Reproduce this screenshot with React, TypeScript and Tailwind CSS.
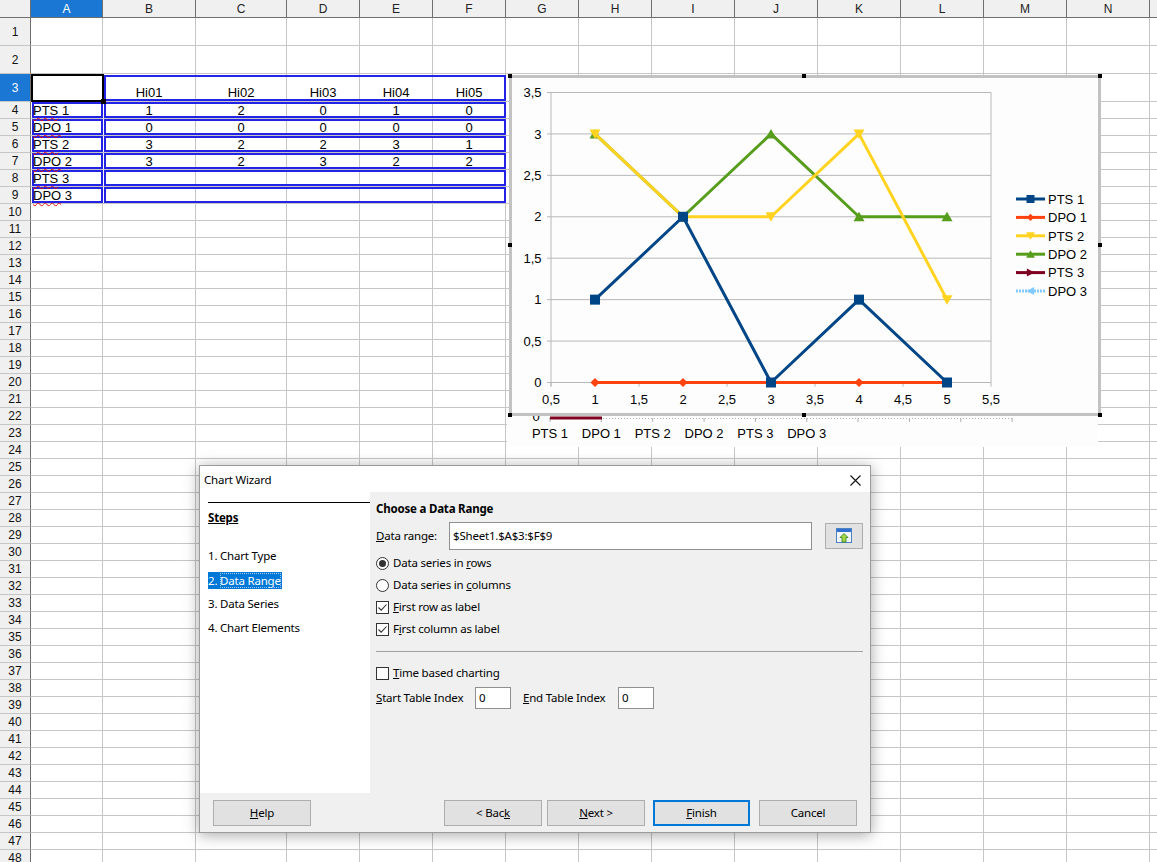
import React from "react";

const COLW = [
  "w-[72px]", "w-[93px]", "w-[91px]", "w-[73px]", "w-[73px]", "w-[73px]", "w-[73px]", "w-[73px]",
  "w-[83px]", "w-[83px]", "w-[83px]", "w-[83px]", "w-[83px]", "w-[83px]", "w-[83px]",
];
const LETTERS = ["A", "B", "C", "D", "E", "F", "G", "H", "I", "J", "K", "L", "M", "N", ""];
const ROWS = Array.from({ length: 48 }, (_, i) => i + 1);

const DATA: Record<number, string[]> = {
  3: ["", "Hi01", "Hi02", "Hi03", "Hi04", "Hi05"],
  4: ["PTS 1", "1", "2", "0", "1", "0"],
  5: ["DPO 1", "0", "0", "0", "0", "0"],
  6: ["PTS 2", "3", "2", "2", "3", "1"],
  7: ["DPO 2", "3", "2", "3", "2", "2"],
  8: ["PTS 3"],
  9: ["DPO 3"],
};

function HeaderRow() {
  return (
    <div className="flex h-[18px]">
      <div className="w-[31px] shrink-0 bg-[#f0f0f0] border-r border-b border-[#6f6f6f]" />
      {LETTERS.map((L, i) => (
        <div
          key={i}
          className={`${COLW[i]} shrink-0 flex items-center justify-center border-r border-b border-[#6f6f6f] text-[12px] ${
            i === 0 ? "bg-[#1a78d4] text-white" : "bg-[#f0f0f0] text-[#222]"
          }`}
        >
          {L}
        </div>
      ))}
    </div>
  );
}

function Label({ text }: { text: string }) {
  const [w, n] = text.split(" ");
  return (
    <span className="relative z-10">
      <span className="underline decoration-wavy decoration-[#e01010] decoration-1 underline-offset-[2px]">{w}</span> {n}
    </span>
  );
}

function Row({ r }: { r: number }) {
  const d = DATA[r];
  const tall = r <= 3;
  return (
    <div className={`flex ${tall ? "h-[28px]" : "h-[17px]"}`}>
      <div
        className={`w-[31px] shrink-0 flex items-center justify-center border-r border-r-[#6f6f6f] border-b border-b-[#c6c6c6] text-[12px] ${
          r === 3 ? "bg-[#1a78d4] text-white" : "bg-[#f0f0f0] text-[#111]"
        }`}
      >
        {r}
      </div>
      {LETTERS.map((L, ci) => {
        const v = d && d[ci] ? d[ci] : "";
        return (
          <div
            key={ci}
            className={`${COLW[ci]} shrink-0 flex border-r border-b border-[#c6c6c6] leading-[15px] ${
              tall ? "items-end pb-[1px]" : "items-center"
            } ${ci === 0 ? "justify-start pl-[2px]" : "justify-center"}`}
          >
            {v ? ci === 0 ? <Label text={v} /> : <span>{v}</span> : null}
          </div>
        );
      })}
    </div>
  );
}

function Overlays() {
  const tops = ["top-[102px]", "top-[119px]", "top-[136px]", "top-[153px]", "top-[170px]", "top-[187px]"];
  return (
    <>
      {tops.map((t) => (
        <React.Fragment key={t}>
          <div className={`absolute ${t} left-[32px] w-[71px] h-[16px] border-2 border-[#2323e6]`} />
          <div className={`absolute ${t} left-[104px] w-[402px] h-[16px] border-2 border-[#2323e6]`} />
        </React.Fragment>
      ))}
      <div className="absolute top-[75px] left-[104px] w-[402px] h-[26px] border-2 border-[#2323e6]" />
      <div className="absolute top-[74px] left-[31px] w-[73px] h-[28px] border-2 border-black" />
      <div className="absolute top-[99px] left-[101px] w-[5px] h-[5px] bg-black" />
    </>
  );
}

const X = (i: number) => 551 + (i - 0.5) * 88;
const Y = (v: number) => 382.5 - v * 82.86;

type Marker = "square" | "diamond" | "down" | "up" | "right" | "left";

function MarkerShape({ m, x, y, c, s = 1 }: { m: Marker; x: number; y: number; c: string; s?: number }) {
  if (m === "square") return <rect x={x - 5 * s} y={y - 5 * s} width={10 * s} height={10 * s} fill={c} />;
  if (m === "diamond")
    return <polygon points={`${x},${y - 4.5 * s} ${x + 4.5 * s},${y} ${x},${y + 4.5 * s} ${x - 4.5 * s},${y}`} fill={c} />;
  if (m === "down")
    return <polygon points={`${x - 5.5 * s},${y - 4.5 * s} ${x + 5.5 * s},${y - 4.5 * s} ${x},${y + 5 * s}`} fill={c} />;
  if (m === "up")
    return <polygon points={`${x - 5.5 * s},${y + 4.5 * s} ${x + 5.5 * s},${y + 4.5 * s} ${x},${y - 5 * s}`} fill={c} />;
  if (m === "right")
    return <polygon points={`${x - 4.5 * s},${y - 5 * s} ${x - 4.5 * s},${y + 5 * s} ${x + 5 * s},${y}`} fill={c} />;
  return <polygon points={`${x + 4.5 * s},${y - 5 * s} ${x + 4.5 * s},${y + 5 * s} ${x - 5 * s},${y}`} fill={c} />;
}

const SERIES: { name: string; color: string; m: Marker; vals: number[] }[] = [
  { name: "PTS 1", color: "#004586", m: "square", vals: [1, 2, 0, 1, 0] },
  { name: "DPO 1", color: "#ff420e", m: "diamond", vals: [0, 0, 0, 0, 0] },
  { name: "PTS 2", color: "#ffd320", m: "down", vals: [3, 2, 2, 3, 1] },
  { name: "DPO 2", color: "#579d1c", m: "up", vals: [3, 2, 3, 2, 2] },
  { name: "PTS 3", color: "#7e0021", m: "right", vals: [] },
  { name: "DPO 3", color: "#83caff", m: "left", vals: [] },
];

function Chart() {
  const yLabels = ["0", "0,5", "1", "1,5", "2", "2,5", "3", "3,5"];
  const xLabels = ["0,5", "1", "1,5", "2", "2,5", "3", "3,5", "4", "4,5", "5", "5,5"];
  const hiddenTicks = Array.from({ length: 10 }, (_, k) => 550 + k * 51.35);
  const hiddenLabels = ["PTS 1", "DPO 1", "PTS 2", "DPO 2", "PTS 3", "DPO 3"];
  const handles: [number, number][] = [
    [508, 74], [802, 74], [1098, 74], [508, 243], [1098, 243], [508, 413], [802, 413], [1098, 413],
  ];
  const drawn = [...SERIES].slice(0, 4).reverse();
  return (
    <svg
      className="absolute left-[507px] top-[73px]"
      width="596"
      height="376"
      viewBox="507 73 596 376"
      fontFamily="'Liberation Sans', Arial, sans-serif"
      fontSize="13"
    >
      {/* remains of the hidden chart below */}
      <rect x="507" y="415" width="591" height="32" fill="#fdfdfd" />
      <line x1="549" y1="418.5" x2="1012" y2="418.5" stroke="#b0b0b0" strokeDasharray="1 2" />
      {hiddenTicks.map((t) => (
        <line key={t} x1={t} y1="418" x2={t} y2="422" stroke="#b0b0b0" />
      ))}
      <rect x="550" y="416.5" width="52" height="3" fill="#7e0021" />
      <text x="536" y="421" textAnchor="middle" fill="#000">0</text>
      {hiddenLabels.map((l, k) => (
        <text key={l} x={550 + k * 51.35} y="438" textAnchor="middle" fill="#000">
          {l}
        </text>
      ))}

      {/* chart frame */}
      <rect x="510.5" y="76.5" width="589" height="338" fill="#fdfdfd" stroke="#c2c2c2" strokeWidth="3" />
      {handles.map(([hx, hy]) => (
        <rect key={`${hx}-${hy}`} x={hx} y={hy} width="4" height="4" fill="#000" />
      ))}

      {/* plot grid */}
      {yLabels.map((l, k) => (
        <g key={l}>
          <line x1="551" y1={Y(k * 0.5)} x2="991" y2={Y(k * 0.5)} stroke="#b8b8b8" />
          <line x1="547" y1={Y(k * 0.5)} x2="551" y2={Y(k * 0.5)} stroke="#b8b8b8" />
          <text x="541.5" y={Y(k * 0.5) + 4.7} textAnchor="end" fill="#000">
            {l}
          </text>
        </g>
      ))}
      <line x1="991" y1={Y(3.5)} x2="991" y2={Y(0)} stroke="#b8b8b8" />
      <line x1="551" y1={Y(3.5)} x2="551" y2={Y(0) + 4} stroke="#b8b8b8" />
      {xLabels.map((l, k) => (
        <g key={l}>
          <line x1={551 + k * 44} y1={Y(0)} x2={551 + k * 44} y2={Y(0) + 4} stroke="#b8b8b8" />
          <text x={551 + k * 44} y="403.5" textAnchor="middle" fill="#000">
            {l}
          </text>
        </g>
      ))}

      {/* series */}
      {drawn.map((s) => (
        <g key={s.name}>
          <polyline
            points={s.vals.map((v, i) => `${X(i + 1)},${Y(v)}`).join(" ")}
            fill="none"
            stroke={s.color}
            strokeWidth="3"
            strokeLinejoin="round"
          />
          {s.vals.map((v, i) => (
            <MarkerShape key={i} m={s.m} x={X(i + 1)} y={Y(v)} c={s.color} />
          ))}
        </g>
      ))}

      {/* legend */}
      {SERIES.map((s, k) => {
        const ly = 199 + k * 18.4;
        return (
          <g key={s.name}>
            <line
              x1="1016"
              y1={ly}
              x2="1045"
              y2={ly}
              stroke={s.color}
              strokeWidth="3"
              strokeDasharray={s.name === "DPO 3" ? "2 1" : undefined}
            />
            <MarkerShape m={s.m} x={1030.5} y={ly} c={s.color} s={0.8} />
            <text x="1048" y={ly + 4.7} fill="#000">
              {s.name}
            </text>
          </g>
        );
      })}
    </svg>
  );
}

function Radio({ on }: { on?: boolean }) {
  return (
    <span className="w-[13px] h-[13px] rounded-full border border-[#333] bg-white flex items-center justify-center shrink-0">
      {on ? <span className="w-[7px] h-[7px] rounded-full bg-[#333]" /> : null}
    </span>
  );
}

function Check({ on }: { on?: boolean }) {
  return (
    <span className="w-[13px] h-[13px] border border-[#333] bg-white flex items-center justify-center shrink-0">
      {on ? (
        <svg width="11" height="11" viewBox="0 0 11 11">
          <path d="M1.5 5.5 L4.2 8.2 L9.5 2.5" fill="none" stroke="#333" strokeWidth="1.1" />
        </svg>
      ) : null}
    </span>
  );
}

function OptRow({ children }: { children: React.ReactNode }) {
  return <div className="h-[22px] flex items-center gap-[4px]">{children}</div>;
}

function Btn({ children, w, primary }: { children: React.ReactNode; w: string; primary?: boolean }) {
  return (
    <div
      className={`${w} h-[26px] flex items-center justify-center bg-[#e1e1e1] ${
        primary ? "border-2 border-[#0078d7]" : "border border-[#adadad]"
      }`}
    >
      {children}
    </div>
  );
}

function RangeIcon() {
  return (
    <svg width="16" height="16" viewBox="0 0 16 16">
      <rect x="0.5" y="0.5" width="15" height="14" fill="#f2f6fb" stroke="#4d82c4" />
      <rect x="1" y="1" width="14" height="3" fill="#2f6fd0" />
      <path d="M8 5.5 L12 9.5 H10 V14 H6 V9.5 H4 Z" fill="#a6d64a" stroke="#3f8a1e" strokeWidth="0.9" />
    </svg>
  );
}

function Dialog() {
  return (
    <div className="absolute left-[199px] top-[465px] w-[672px] h-[368px] border border-[#9b9b9b] bg-[#f0f0f0] shadow-[0_2px_14px_rgba(0,0,0,0.35)] flex flex-col font-['Noto_Sans',sans-serif] text-[11.5px] tracking-[-0.2px] text-black leading-[16px]">
      <div className="h-[26px] shrink-0 bg-white flex items-center justify-between pl-[4px] pr-[9px] pt-[2px]">
        <span>Chart Wizard</span>
        <svg width="11" height="11" viewBox="0 0 11 11">
          <path d="M0.5 0.5 L10.5 10.5 M10.5 0.5 L0.5 10.5" stroke="#111" strokeWidth="1.1" />
        </svg>
      </div>
      <div className="flex h-[301px] shrink-0">
        <div className="w-[170px] shrink-0 bg-white pl-[8px] pt-[10px]">
          <div className="h-px bg-black" />
          <div className="mt-[7px] h-[16px] font-bold underline">Steps</div>
          <div className="mt-[18px] flex flex-col">
            <div className="h-[24px] flex items-center">1. Chart Type</div>
            <div className="h-[24px] flex items-center">
              <span className="bg-[#0078d7] text-white leading-[17px] pr-[1px]">
                2. <span className="outline-1 outline-dotted outline-[#9cc8f0] -outline-offset-1">Data Range</span>
              </span>
            </div>
            <div className="h-[24px] flex items-center">3. Data Series</div>
            <div className="h-[24px] flex items-center">4. Chart Elements</div>
          </div>
        </div>
        <div className="flex-1 pl-[6px] pt-[9px] flex flex-col">
          <div className="h-[16px] font-bold">Choose a Data Range</div>
          <div className="mt-[5px] h-[28px] flex items-center">
            <span className="w-[73px] shrink-0">
              <u>D</u>ata range:
            </span>
            <div className="w-[363px] h-[28px] border border-[#8f8f8f] bg-white flex items-center pl-[3px]">
              $Sheet1.$A$3:$F$9
            </div>
            <div className="ml-[13px] w-[38px] h-[26px] border border-[#adadad] bg-[#e1e1e1] flex items-center justify-center">
              <RangeIcon />
            </div>
          </div>
          <div className="mt-[2px] flex flex-col">
            <OptRow>
              <Radio on />
              <span>
                Data series in <u>r</u>ows
              </span>
            </OptRow>
            <OptRow>
              <Radio />
              <span>
                Data series in <u>c</u>olumns
              </span>
            </OptRow>
            <OptRow>
              <Check on />
              <span>
                <u>F</u>irst row as label
              </span>
            </OptRow>
            <OptRow>
              <Check on />
              <span>
                F<u>i</u>rst column as label
              </span>
            </OptRow>
          </div>
          <div className="mt-[11px] w-[487px] h-px bg-[#a0a0a0]" />
          <div className="mt-[10px]">
            <OptRow>
              <Check />
              <span>
                <u>T</u>ime based charting
              </span>
            </OptRow>
          </div>
          <div className="mt-[3px] h-[22px] flex items-center">
            <span className="w-[99px] shrink-0">
              <u>S</u>tart Table Index
            </span>
            <div className="w-[36px] h-[22px] border border-[#8f8f8f] bg-white flex items-center pl-[3px]">0</div>
            <span className="ml-[12px] w-[95px] shrink-0">
              <u>E</u>nd Table Index
            </span>
            <div className="w-[36px] h-[22px] border border-[#8f8f8f] bg-white flex items-center pl-[3px]">0</div>
          </div>
        </div>
      </div>
      <div className="flex-1 flex items-start justify-between pt-[7px] pl-[13px] pr-[13px]">
        <Btn w="w-[98px]">
          <span>
            <u>H</u>elp
          </span>
        </Btn>
        <div className="flex">
          <Btn w="w-[98px]">
            <span>
              &lt; Bac<u>k</u>
            </span>
          </Btn>
          <div className="ml-[5px]">
            <Btn w="w-[98px]">
              <span>
                <u>N</u>ext &gt;
              </span>
            </Btn>
          </div>
          <div className="ml-[8px]">
            <Btn w="w-[97px]" primary>
              <span>
                <u>F</u>inish
              </span>
            </Btn>
          </div>
          <div className="ml-[9px]">
            <Btn w="w-[98px]">
              <span>Cancel</span>
            </Btn>
          </div>
        </div>
      </div>
    </div>
  );
}

export default function App() {
  return (
    <div className="relative w-[1157px] h-[862px] overflow-hidden bg-white font-['Liberation_Sans',Arial,sans-serif] text-[13px] text-black">
      <HeaderRow />
      {ROWS.map((r) => (
        <Row key={r} r={r} />
      ))}
      <Overlays />
      <Chart />
      <Dialog />
    </div>
  );
}
